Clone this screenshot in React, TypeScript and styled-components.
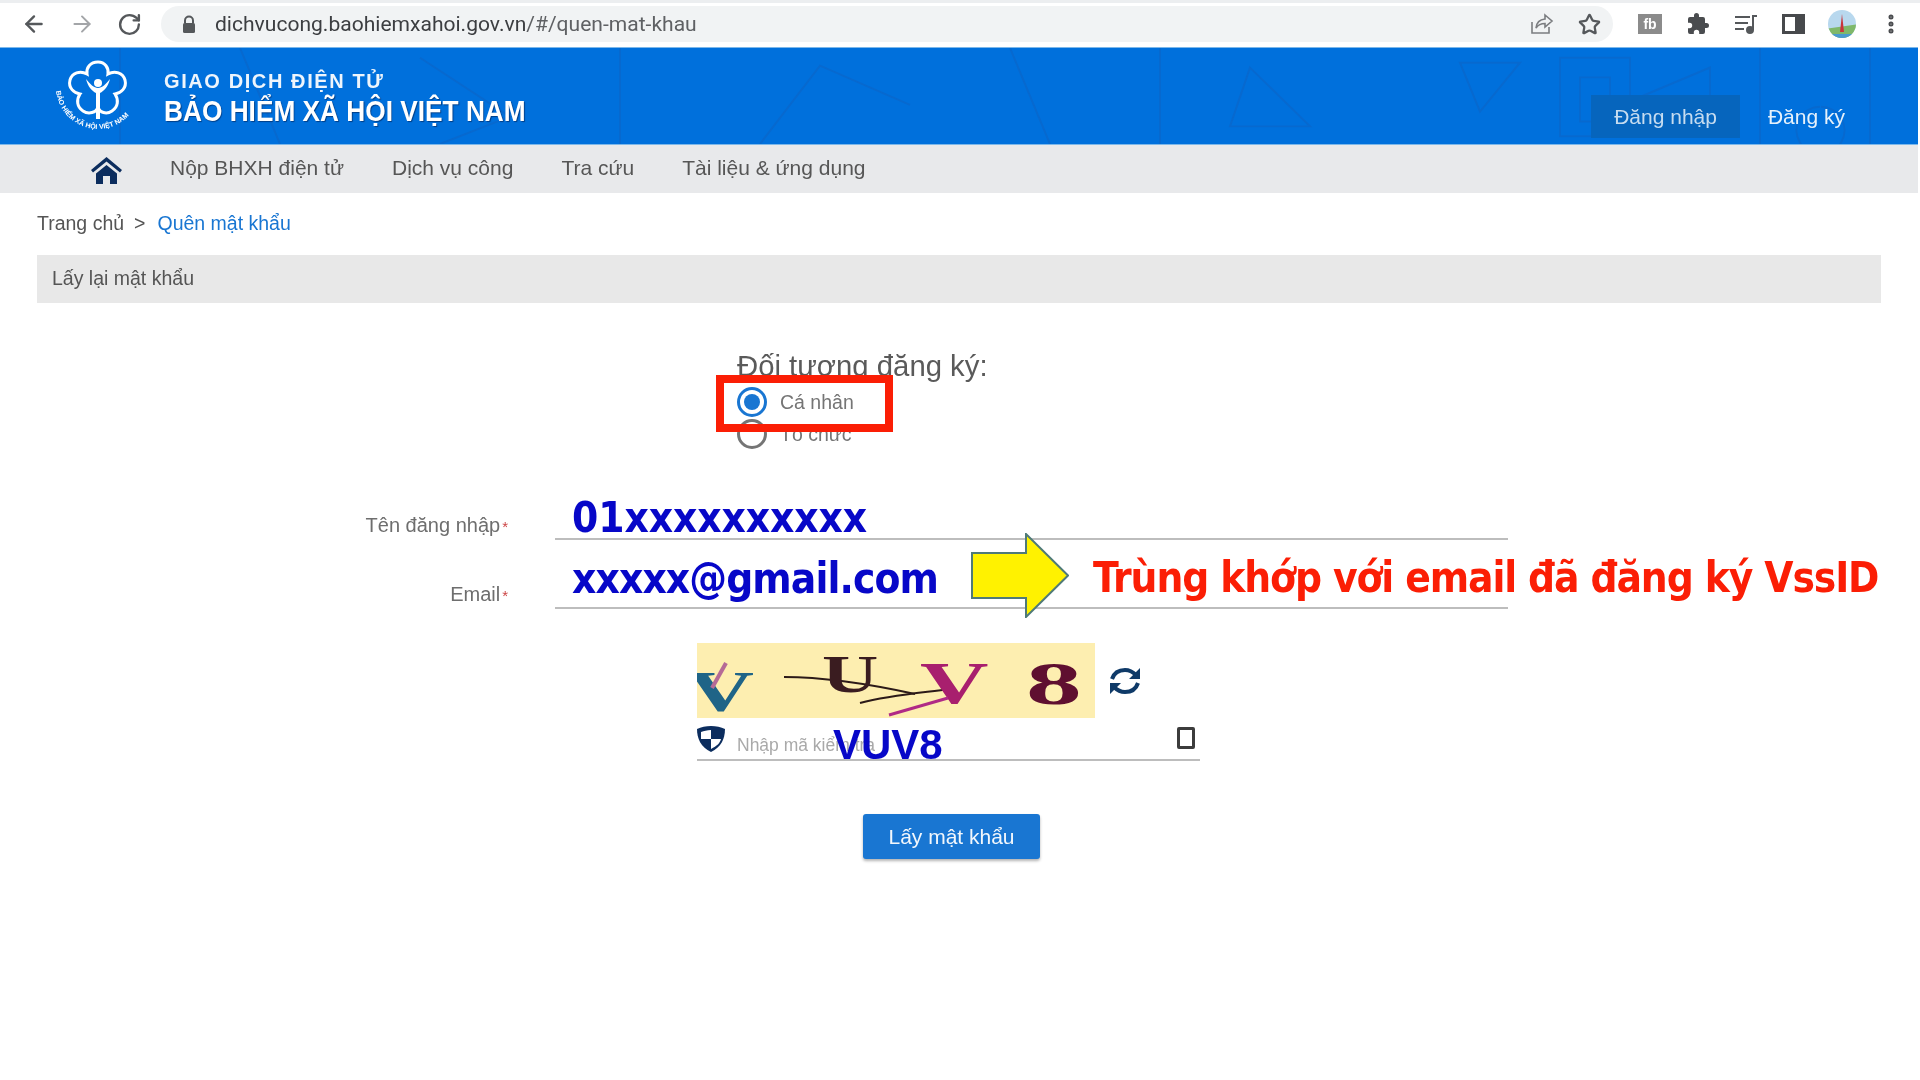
import React from "react";
import styled, { createGlobalStyle } from "styled-components";
import { ArrowLeft, ArrowRight, RotateCw, Star, MoreVertical } from "lucide-react";

const Global = createGlobalStyle`
  html, body { margin: 0; padding: 0; background: #fff; }
  body { font-family: "Liberation Sans", Arial, sans-serif; }
`;

const Page = styled.div`
  width: 1920px;
  height: 1080px;
  overflow: hidden;
  background: #fff;
  display: flex;
  flex-direction: column;
  position: relative;
  filter: blur(0.45px);
`;

/* Browser chrome */
const Toolbar = styled.div`
  height: 47px;
  box-sizing: border-box;
  display: flex;
  align-items: center;
  padding: 0 0 2px 21px;
  border-top: 3px solid #eceef0;
  color: #5a5d60;
`;
const NavIcon = styled.span<{ $muted?: boolean; $w?: number }>`
  width: ${(p) => p.$w ?? 48}px;
  display: flex;
  justify-content: flex-start;
  align-items: center;
  color: ${(p) => (p.$muted ? "#a3a5a8" : "#55585b")};
`;
const Omnibox = styled.div`
  flex: none;
  width: 1452px;
  height: 36px;
  margin-left: -2px;
  border-radius: 18px;
  background: #f1f3f4;
  display: flex;
  align-items: center;
  padding: 0 12px 0 20px;
  box-sizing: border-box;
`;
const Url = styled.div`
  flex: 1;
  margin-left: 18px;
  margin-top: -1px;
  font: 21.05px "Roboto", sans-serif;
  color: #5f6164;
  b { font-weight: 400; color: #3c3e41; }
`;
const OmniIcons = styled.div`
  display: flex;
  align-items: center;
  gap: 24px;
`;
const Tools = styled.div`
  display: flex;
  align-items: center;
  gap: 24px;
  margin-left: 25px;
`;
const FbBadge = styled.span`
  width: 24px;
  height: 20px;
  background: #8b8b8b;
  color: #fff;
  font: bold 14px "Liberation Sans", sans-serif;
  display: flex;
  align-items: center;
  justify-content: center;
`;

/* Site header */
const Header = styled.header`
  height: 98px;
  margin-right: 2px;
  box-sizing: border-box;
  background: #0070dc;
  border-top: 1px solid #7db8ea;
  border-bottom: 1px solid #7db8ea;
  display: flex;
  align-items: flex-start;
  padding-left: 53px;
  position: relative;
  overflow: hidden;
`;
const Pattern = styled.svg`
  position: absolute;
  inset: 0;
  width: 100%;
  height: 100%;
`;
const Logo = styled.svg`
  width: 90px;
  height: 90px;
  margin-top: 11px;
  position: relative;
`;
const Brand = styled.div`
  margin-left: 21px;
  margin-top: 22px;
  color: #fff;
  position: relative;
  font-weight: 700;
`;
const BrandTop = styled.div`
  font-size: 20px;
  line-height: 22px;
  letter-spacing: 1.6px;
  color: #eef5fc;
`;
const BrandMain = styled.div`
  font-size: 30px;
  line-height: 32px;
  margin-top: 3px;
  white-space: nowrap;
  transform: scaleX(0.875);
  transform-origin: left center;
  text-shadow: 1px 1px 1px rgba(0, 30, 80, 0.6);
`;
const Auth = styled.div`
  margin-left: auto;
  margin-top: 47px;
  display: flex;
  position: relative;
  margin-right: 70px;
  gap: 25px;
`;
const AuthLink = styled.a<{ $active?: boolean }>`
  height: 43px;
  display: flex;
  align-items: center;
  font-size: 21px;
  padding: 0 ${(p) => (p.$active ? 23 : 3)}px;
  background: ${(p) => (p.$active ? "#0665bd" : "transparent")};
  color: ${(p) => (p.$active ? "#c6dcf0" : "#e6f1fb")};
`;

/* Menu */
const Menu = styled.nav`
  height: 48px;
  margin-right: 2px;
  padding-bottom: 2px;
  box-sizing: border-box;
  background: #e8e9eb;
  display: flex;
  align-items: center;
  padding-left: 91px;
  gap: 48px;
  font-size: 21px;
  color: #565656;
`;
const HomeIcon = styled.svg`
  width: 31px;
  height: 27px;
  margin-top: 5px;
`;

/* Content */
const Crumbs = styled.div`
  margin: 20px 0 0 37px;
  height: 20px;
  font-size: 19.5px;
  line-height: 20px;
  color: #555;
  display: flex;
  gap: 10px;
`;
const CrumbCurrent = styled.span`
  color: #1976d2;
  margin-left: 2px;
`;
const PanelTitle = styled.div`
  margin: 22px 39px 0 37px;
  height: 48px;
  box-sizing: border-box;
  padding: 0 0 2px 15px;
  background: #e8e8e8;
  font-size: 19.5px;
  color: #555;
  display: flex;
  align-items: center;
`;
const Subject = styled.div`
  margin: 45px 0 0 737px;
  position: relative;
`;
const SubjectTitle = styled.div`
  font-size: 29.3px;
  line-height: 36px;
  color: #5a5a5a;
  margin-bottom: 2px;
`;
const RadioRow = styled.div`
  height: 32px;
  display: flex;
  align-items: center;
  gap: 13px;
  font-size: 19.5px;
  color: #757575;
`;
const Radio = styled.span<{ $on?: boolean }>`
  width: 30px;
  height: 30px;
  box-sizing: border-box;
  border-radius: 50%;
  border: 3px solid ${(p) => (p.$on ? "#1976d2" : "#757575")};
  display: flex;
  align-items: center;
  justify-content: center;
  &::after {
    content: "";
    width: 16px;
    height: 16px;
    border-radius: 50%;
    background: ${(p) => (p.$on ? "#1976d2" : "transparent")};
  }
`;
const Highlight = styled.div`
  position: absolute;
  left: -21px;
  top: 27px;
  width: 177px;
  height: 57px;
  box-sizing: border-box;
  border: 8px solid #fb1e05;
`;
const Fields = styled.div`
  margin: 21px 0 0 300px;
  width: 1208px;
  display: flex;
  flex-direction: column;
`;
const FieldRow = styled.div`
  height: 69px;
  display: grid;
  grid-template-columns: 208px 1fr;
  column-gap: 47px;
  align-items: end;
`;
const FieldLabel = styled.div`
  font-size: 20px;
  color: #6e6e6e;
  text-align: right;
  padding-bottom: 3px;
  white-space: nowrap;
`;
const Required = styled.span`
  color: #c44;
  margin-left: 2px;
  font-size: 15px;
`;
const FieldLine = styled.div`
  height: 44px;
  border-bottom: 2px solid #bdbdbd;
  position: relative;
`;
const Typed = styled.span<{ $tight?: boolean }>`
  position: absolute;
  left: 17px;
  top: ${(p) => (p.$tight ? -9 : -1)}px;
  font: 700 42px/50px "DejaVu Sans Condensed", "DejaVu Sans", sans-serif;
  font-stretch: condensed;
  letter-spacing: ${(p) => (p.$tight ? -0.9 : -0.1)}px;
  color: #0707c8;
  white-space: nowrap;
`;
const Note = styled.div`
  position: absolute;
  left: 971px;
  top: 533px;
  display: flex;
  align-items: center;
  gap: 24px;
`;
const NoteText = styled.span`
  font: 700 42px/50px "DejaVu Sans Condensed", "DejaVu Sans", sans-serif;
  font-stretch: condensed;
  letter-spacing: -1.1px;
  padding-top: 4px;
  color: #fb1e05;
  white-space: nowrap;
`;
const Captcha = styled.div`
  margin: 34px 0 0 697px;
  display: flex;
  align-items: center;
  gap: 14px;
`;
const CaptchaImage = styled.svg`
  width: 398px;
  height: 75px;
  background: #fdeeb0;
`;
const CaptchaInput = styled.div`
  margin: 6px 0 0 697px;
  width: 503px;
  height: 37px;
  box-sizing: border-box;
  border-bottom: 2px solid #bdbdbd;
  display: flex;
  align-items: flex-start;
  position: relative;
`;
const Placeholder = styled.span`
  margin: 11px 0 0 12px;
  font-size: 17.5px;
  color: #a9a9a9;
  white-space: nowrap;
`;
const CaptchaTyped = styled.span`
  position: absolute;
  left: 136px;
  top: 1px;
  font: 700 42px/40px "Liberation Sans", sans-serif;
  color: #0707c8;
`;
const Device = styled.span`
  margin-left: auto;
  margin-right: 5px;
  margin-top: 3px;
  width: 18px;
  height: 22px;
  box-sizing: border-box;
  border: 3px solid #3c3c3c;
  border-radius: 2px;
`;
const ButtonWrap = styled.div`
  margin: 53px 0 0 863px;
`;
const Submit = styled.button`
  width: 177px;
  height: 45px;
  border: 0;
  border-radius: 3px;
  background: #1976d2;
  color: #f2f7fc;
  font: 21px "Liberation Sans", sans-serif;
  box-shadow: 0 2px 3px rgba(0, 0, 0, 0.3);
`;

const Icon = styled.svg`
  display: block;
`;
const ShieldIcon = styled(Icon)`
  margin-top: 2px;
  flex: none;
`;
const AvatarIcon = styled(Icon)`
  margin-left: -4px;
`;
const MenuDots = styled(MoreVertical)`
  margin-left: -4px;
  flex: none;
`;

const serif = "Liberation Serif, serif";

export default function App() {
  return (
    <Page>
      <Global />
      <Toolbar>
        <NavIcon><ArrowLeft size={26} strokeWidth={2.2} /></NavIcon>
        <NavIcon $muted><ArrowRight size={26} strokeWidth={1.8} /></NavIcon>
        <NavIcon $w={46}><RotateCw size={25} strokeWidth={2.3} /></NavIcon>
        <Omnibox>
          <Icon width="16" height="19" viewBox="0 0 16 19">
            <path d="M4 8V5.5a4 4 0 0 1 8 0V8" fill="none" stroke="#55585b" strokeWidth="2" />
            <rect x="2" y="8" width="12" height="10" rx="1.5" fill="#55585b" />
          </Icon>
          <Url><b>dichvucong.baohiemxahoi.gov.vn</b>/#/quen-mat-khau</Url>
          <OmniIcons>
            <Icon width="24" height="22" viewBox="0 0 24 22" fill="none" stroke="#7b7d80" strokeWidth="1.6">
              <path d="M2 9v11h17v-6" />
              <path d="M15 2l7 6-7 6v-3.5c-4 0-7 1.500-9 4.500 .5-5 4-8.500 9-9z" />
            </Icon>
            <Star size={23} strokeWidth={2.4} color="#55585b" />
          </OmniIcons>
        </Omnibox>
        <Tools>
          <FbBadge>fb</FbBadge>
          <Icon width="24" height="24" viewBox="0 0 24 24">
            <path fill="#4a4c4f" d="M20.500 11H19V7a2 2 0 0 0-2-2h-4V3.500a2.500 2.500 0 0 0-5 0V5H4a2 2 0 0 0-2 2v3.800h1.500a2.700 2.700 0 0 1 0 5.400H2V20a2 2 0 0 0 2 2h3.800v-1.500a2.700 2.700 0 0 1 5.400 0V22H17a2 2 0 0 0 2-2v-4h1.500a2.500 2.500 0 0 0 0-5z" />
          </Icon>
          <Icon width="24" height="22" viewBox="0 0 24 22" fill="none" stroke="#55585b" strokeWidth="2">
            <path d="M1 4h15M1 10h13M1 16h9" />
            <path d="M19 17V3h4" />
            <circle cx="16" cy="17" r="3" fill="#55585b" />
          </Icon>
          <Icon width="23" height="20" viewBox="0 0 23 20">
            <rect x="1.500" y="1.500" width="20" height="17" fill="none" stroke="#47494c" strokeWidth="3" />
            <rect x="13" y="2" width="8" height="16" fill="#47494c" />
          </Icon>
          <AvatarIcon width="34" height="28" viewBox="0 0 34 28">
            <defs>
              <clipPath id="av"><circle cx="17" cy="14" r="14" /></clipPath>
            </defs>
            <g clipPath="url(#av)">
              <rect width="34" height="28" fill="#b8d8ee" />
              <path d="M0 19L34 14V28H0z" fill="#7fb86a" />
              <path d="M15 22L17 4l2 18z" fill="#c9343a" />
              <path d="M0 24h34v4H0z" fill="#4a9bd0" />
            </g>
          </AvatarIcon>
          <MenuDots size={24} strokeWidth={3} color="#4a4c4f" />
        </Tools>
      </Toolbar>

      <Header>
        <Pattern viewBox="0 0 1918 98" preserveAspectRatio="none" fill="none" stroke="#0769cf" strokeWidth="2">
          <path d="M120 0v98M240 0l40 98M420 10l90 60-70 28M620 0v98M760 98l60-80 90 40M1010 0l40 98M1160 0v98M1250 20l60 60H1230zM1460 15h60l-40 50zM1560 10h70v80h-70zM1580 30h30v45h-30zM1640 50l70-30v50zM1760 0v98M1820 60a24 24 0 1 0 1 0M1870 0v98" />
        </Pattern>
        <Logo viewBox="0 0 90 90">
          <defs>
            <path id="ring" d="M3 28a42 42 0 0 0 84 0" />
          </defs>
          <path
            d="M45 3c7 0 11 6 10 12 7-4 15-1 17 6 2 8-4 13-10 14 4 6 3 13-3 17-6 4-12 1-14-3-2 4-9 7-15 3-6-4-7-11-3-17-6-1-12-6-10-14 2-7 10-10 17-6-1-6 3-12 11-12z"
            fill="none"
            stroke="#fff"
            strokeWidth="3"
          />
          <circle cx="45" cy="24" r="4" fill="#fff" />
          <path d="M33 20c2 8 6 12 10 14v26h4V34c4-2 8-6 10-14-4 5-8 9-12 9s-8-4-12-9z" fill="#fff" />
          <text fontFamily="Liberation Sans, sans-serif" fontSize="7" fontWeight="700" fill="#fff">
            <textPath href="#ring" startOffset="3%">BẢO HIỂM XÃ HỘI VIỆT NAM</textPath>
          </text>
        </Logo>
        <Brand>
          <BrandTop>GIAO DỊCH ĐIỆN TỬ</BrandTop>
          <BrandMain>BẢO HIỂM XÃ HỘI VIỆT NAM</BrandMain>
        </Brand>
        <Auth>
          <AuthLink $active>Đăng nhập</AuthLink>
          <AuthLink>Đăng ký</AuthLink>
        </Auth>
      </Header>

      <Menu>
        <HomeIcon viewBox="0 0 31 27">
          <path fill="#0c2d5e" d="M15.500 0L0 13l2 2.500L15.500 4.500 29 15.500 31 13z" />
          <path fill="#0c2d5e" d="M5 16.500L15.500 8 26 16.500V27h-7v-8h-7v8H5z" />
        </HomeIcon>
        <span>Nộp BHXH điện tử</span>
        <span>Dịch vụ công</span>
        <span>Tra cứu</span>
        <span>Tài liệu &amp; ứng dụng</span>
      </Menu>

      <Crumbs>
        <span>Trang chủ</span>
        <span>&gt;</span>
        <CrumbCurrent>Quên mật khẩu</CrumbCurrent>
      </Crumbs>
      <PanelTitle>Lấy lại mật khẩu</PanelTitle>

      <Subject>
        <SubjectTitle>Đối tượng đăng ký:</SubjectTitle>
        <RadioRow><Radio $on />Cá nhân</RadioRow>
        <RadioRow><Radio />Tổ chức</RadioRow>
        <Highlight />
      </Subject>

      <Fields>
        <FieldRow>
          <FieldLabel>Tên đăng nhập<Required>*</Required></FieldLabel>
          <FieldLine><Typed>01xxxxxxxxxx</Typed></FieldLine>
        </FieldRow>
        <FieldRow>
          <FieldLabel>Email<Required>*</Required></FieldLabel>
          <FieldLine><Typed $tight>xxxxx@gmail.com</Typed></FieldLine>
        </FieldRow>
      </Fields>

      <Note>
        <Icon width="98" height="85" viewBox="0 0 98 85">
          <path d="M1 20h54V1l42 41.500L55 84V65H1z" fill="#fff200" stroke="#4f7a78" strokeWidth="2" />
        </Icon>
        <NoteText>Trùng khớp với email đã đăng ký VssID</NoteText>
      </Note>

      <Captcha>
        <CaptchaImage viewBox="0 0 398 75">
          <text transform="translate(-10 68) scale(1.6 1)" fontFamily={serif} fontWeight="700" fontSize="58" fill="#1f6487">V</text>
          <path d="M29 20L15 45" stroke="#b56a96" strokeWidth="4" />
          <path d="M87 34c40 0 90 8 131 17" stroke="#2c1a18" strokeWidth="2" fill="none" />
          <text transform="translate(125 49) scale(1.5 1)" fontFamily={serif} fontWeight="700" fontSize="52" fill="#3a1c20">U</text>
          <path d="M163 60c30-8 60-10 90-14" stroke="#2c1a18" strokeWidth="2" fill="none" />
          <text transform="translate(223 60) scale(1.58 1)" fontFamily={serif} fontWeight="700" fontSize="60" fill="#a81f6e">V</text>
          <path d="M192 72l59-17" stroke="#b02a86" strokeWidth="3" />
          <text transform="translate(329 61) scale(1.8 1)" fontFamily={serif} fontWeight="700" fontSize="62" fill="#5f0f30">8</text>
        </CaptchaImage>
        <Icon width="32" height="28" viewBox="0 0 32 28">
          <path fill="none" stroke="#0f3a68" strokeWidth="4" d="M3 12C5 6 10 3 16 3c4 0 8 2 11 5M29 16c-2 6-7 9-13 9-4 0-8-2-11-5" />
          <path fill="#0f3a68" d="M31 1v11H20zM1 27V16h11z" />
        </Icon>
      </Captcha>
      <CaptchaInput>
        <ShieldIcon width="28" height="26" viewBox="0 0 28 26">
          <path fill="#0c2d5e" d="M14 0c5 0 10 1 14 3 0 10-4 18-14 23C4 21 0 13 0 3c4-2 9-3 14-3z" />
          <path fill="#fff" d="M14 4v9h10c-1 4-4 7-10 10V13H4V6c3-1 6-2 10-2z" />
        </ShieldIcon>
        <Placeholder>Nhập mã kiểm tra</Placeholder>
        <CaptchaTyped>VUV8</CaptchaTyped>
        <Device />
      </CaptchaInput>

      <ButtonWrap>
        <Submit>Lấy mật khẩu</Submit>
      </ButtonWrap>
    </Page>
  );
}
